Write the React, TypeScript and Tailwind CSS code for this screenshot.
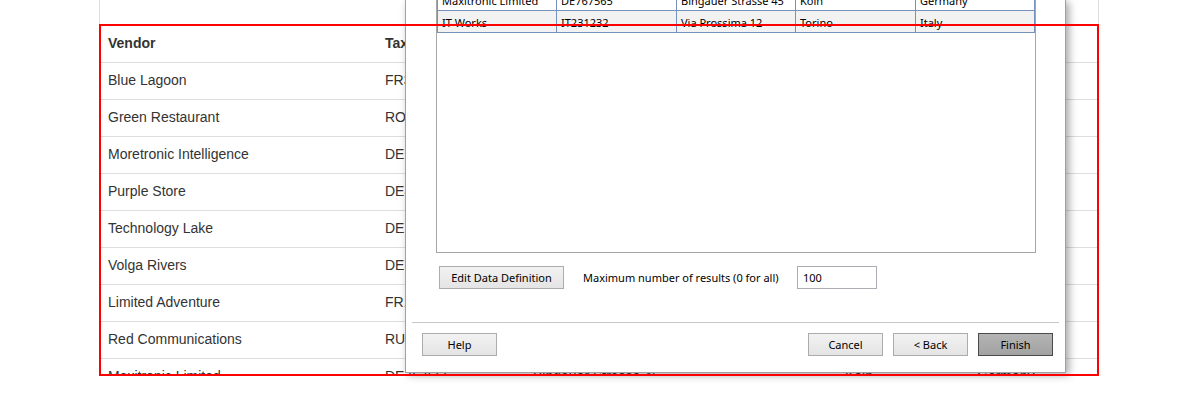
const vendors = [
  ['Blue Lagoon', 'FR32543215', 'Rue de la Paix 12', 'Paris', 'France'],
  ['Green Restaurant', 'RO4512365', 'Strada Lunga 8', 'Bucuresti', 'Romania'],
  ['Moretronic Intelligence', 'DE954123', 'Hauptstrasse 20', 'Berlin', 'Germany'],
  ['Purple Store', 'DE412578', 'Marktplatz 3', 'Hamburg', 'Germany'],
  ['Technology Lake', 'DE745123', 'Seestrasse 71', 'Munchen', 'Germany'],
  ['Volga Rivers', 'DE321456', 'Am Ufer 5', 'Dresden', 'Germany'],
  ['Limited Adventure', 'FR14785236', 'Avenue Victor Hugo 4', 'Lyon', 'France'],
  ['Red Communications', 'RU3214569', 'Tverskaya 18', 'Moskva', 'Russia'],
  ['Maxitronic Limited', 'DE767565', 'Bingauer Strasse 45', 'Koln', 'Germany'],
];

const gridRows = [
  ['Maxitronic Limited', 'DE767565', 'Bingauer Strasse 45', 'Koln', 'Germany'],
  ['IT Works', 'IT231232', 'Via Prossima 12', 'Torino', 'Italy'],
];

const gridCols = ['w-[119px]', 'w-[120px]', 'w-[119px]', 'w-[120px]', 'w-[119px]'];

function WinButton({ label, primary }: { label: string; primary?: boolean }) {
  return (
    <button
      className={
        primary
          ? 'h-[23px] w-[75px] border border-[#4a4a4a] bg-gradient-to-b from-[#b4b4b4] to-[#a2a2a2] pt-[2px] text-[11px] text-black'
          : 'h-[23px] w-[75px] border border-[#acacac] bg-gradient-to-b from-[#f2f2f2] to-[#e4e4e4] pt-[2px] text-[11px] text-black'
      }
    >
      {label}
    </button>
  );
}

export default function App() {
  return (
    <div className="relative h-[401px] w-[1198px] overflow-hidden bg-white">
      {/* page behind the dialog */}
      <div className="ml-[99px] h-[375px] w-[1000px] overflow-hidden border-x border-[#dddddd] pt-[26px] font-['Liberation_Sans',Arial,sans-serif] text-[14px] leading-5 text-[#333333]">
        <table className="w-[998px] table-fixed border-collapse">
          <colgroup>
            <col className="w-[277px]" />
            <col className="w-[148px]" />
            <col className="w-[312px]" />
            <col className="w-[132px]" />
            <col className="w-[129px]" />
          </colgroup>
          <thead>
            <tr className="border-b border-[#dddddd] text-left font-bold">
              <th className="px-2 pb-[9px] pt-[7px]">Vendor</th>
              <th className="px-2 pb-[9px] pt-[7px]">Tax ID</th>
              <th className="px-2 pb-[9px] pt-[7px]">Address</th>
              <th className="px-2 pb-[9px] pt-[7px]">City</th>
              <th className="px-2 pb-[9px] pt-[7px]">Country</th>
            </tr>
          </thead>
          <tbody>
            {vendors.map((v) => (
              <tr key={v[0]} className="border-b border-[#dddddd]">
                {v.map((c, i) => (
                  <td key={i} className="whitespace-nowrap px-2 pb-[9px] pt-[7px]">
                    {c}
                  </td>
                ))}
              </tr>
            ))}
          </tbody>
        </table>
      </div>

      {/* wizard dialog */}
      <div className="absolute left-[405px] top-0 z-10 flex h-[373px] w-[661px] flex-col border-x border-b border-[#a0a0a0] bg-white font-['Noto_Sans',sans-serif] text-[11px] text-black shadow-[3px_2px_8px_rgba(0,0,0,0.35)]">
        <div className="ml-[30px] h-[253px] w-[600px] overflow-hidden border-x border-b border-[#a6a6a6]">
          <div className="-mt-[11px] w-[598px]">
            {gridRows.map((r, ri) => (
              <div
                key={ri}
                className={
                  ri === 1
                    ? 'flex h-[22px] border-b border-l border-[#7393bb] bg-[#f2f2f2]'
                    : 'flex h-[22px] border-b border-l border-[#7393bb] bg-white'
                }
              >
                {r.map((c, ci) => (
                  <div
                    key={ci}
                    className={`${gridCols[ci]} flex items-center border-r border-[#7393bb] pl-[4px] pt-px leading-none`}
                  >
                    {c}
                  </div>
                ))}
              </div>
            ))}
          </div>
        </div>

        <div className="ml-[33px] mt-[13px] flex h-[23px] items-center">
          <button className="h-[23px] w-[125px] border border-[#acacac] bg-gradient-to-b from-[#f2f2f2] to-[#e4e4e4] pt-[2px] text-[11px] text-black">
            Edit Data Definition
          </button>
          <span className="ml-[19px] w-[214px] pt-[2px]">Maximum number of results (0 for all)</span>
          <div className="flex h-[23px] w-[80px] items-center border border-[#abadb3] pl-[5px] pt-[2px]">100</div>
        </div>

        <div className="mx-[6px] mt-[33px] h-px bg-[#c6c6c6]" />

        <div className="mt-[10px] flex items-center pl-[16px] pr-[12px]">
          <WinButton label="Help" />
          <div className="flex-1" />
          <div className="flex gap-[10px]">
            <WinButton label="Cancel" />
            <WinButton label="< Back" />
            <WinButton label="Finish" primary />
          </div>
        </div>
      </div>

      {/* red highlight frame */}
      <div className="pointer-events-none absolute left-[99px] top-[24px] z-20 h-[352px] w-[1000px] border-2 border-[#ff0000]" />
    </div>
  );
}
